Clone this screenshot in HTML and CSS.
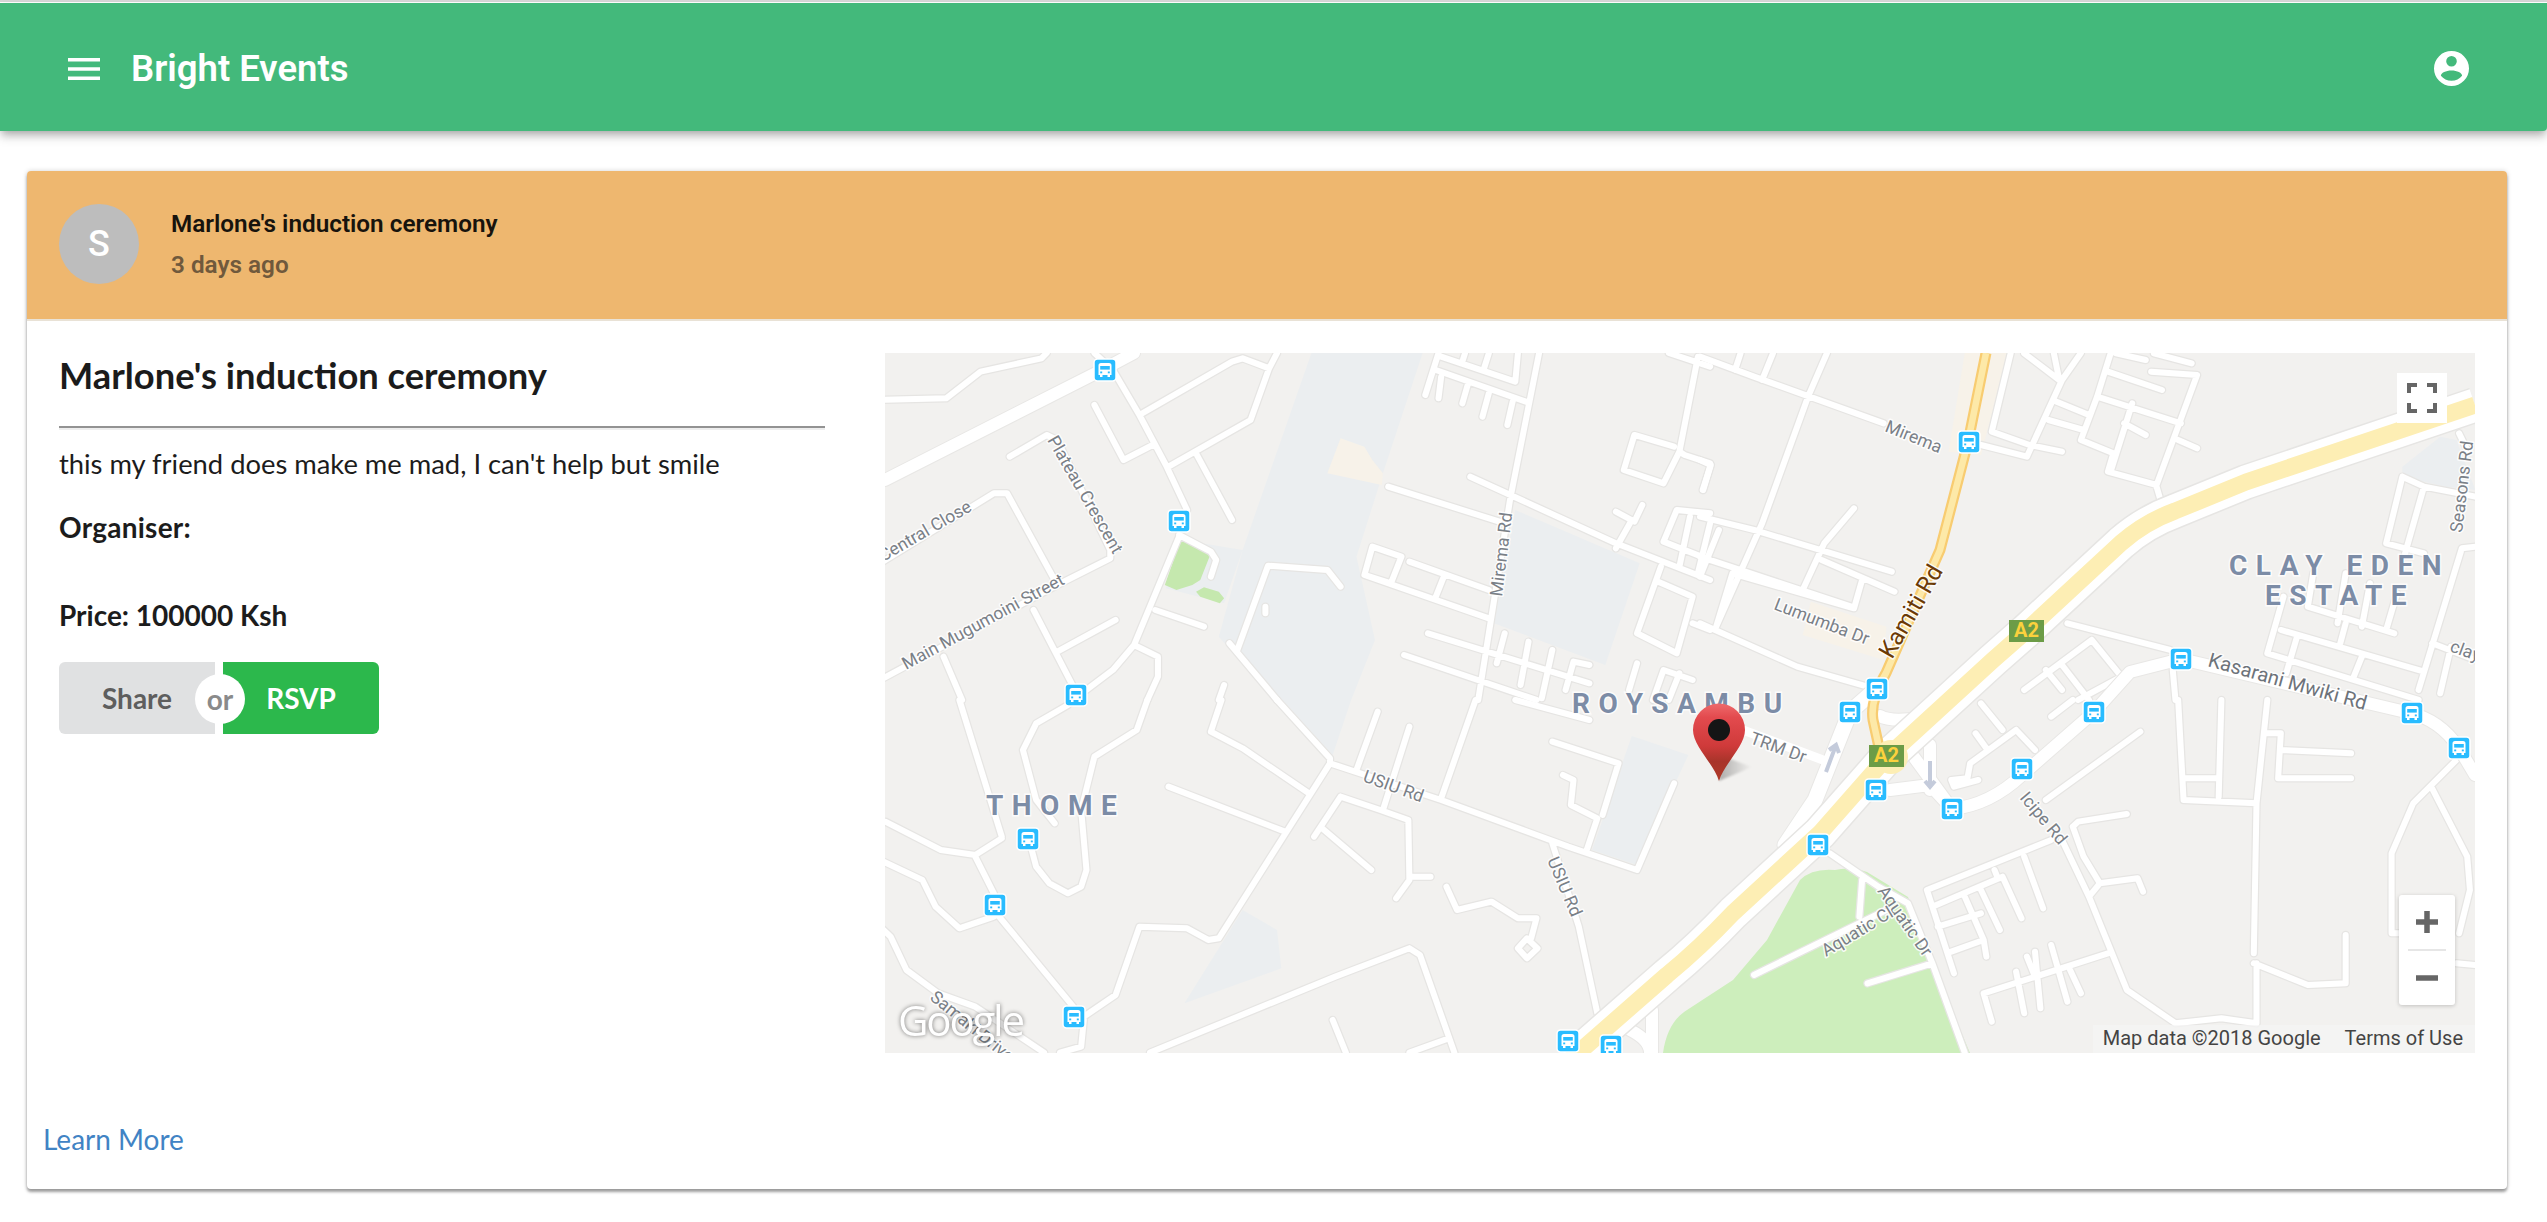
FILE: index.html
```html
<!DOCTYPE html>
<html lang="en">
<head>
<meta charset="utf-8">
<title>Bright Events</title>
<link rel="stylesheet" href="styles.css">
</head>
<body>
<div class="app">
  <header class="navbar">
    <svg class="menu-icon" viewBox="0 0 32 22" aria-hidden="true"><path d="M0 0h32v3.600H0zM0 9.200h32v3.600H0zM0 18.400h32V22H0z"/></svg>
    <h1 class="brand">Bright Events</h1>
    <svg class="account-icon" viewBox="0 0 35 35" aria-hidden="true"><path fill-rule="evenodd" d="M17.500 0a17.500 17.500 0 1 0 0 35a17.500 17.500 0 1 0 0-35zM17.500 5a5.300 5.300 0 1 1 0 10.600a5.300 5.300 0 1 1 0-10.600zM17.500 19.500c5.600 0 10.600 2.300 10.600 5.200c-2.400 3-6.300 5-10.600 5s-8.200-2-10.600-5c0-2.900 5-5.200 10.600-5.200z"/></svg>
  </header>

  <main class="card">
    <div class="card-header">
      <div class="avatar">S</div>
      <div class="header-text">
        <div class="header-title">Marlone's induction ceremony</div>
        <div class="header-sub">3 days ago</div>
      </div>
    </div>

    <div class="card-body">
      <section class="details">
        <h2 class="event-title">Marlone's induction ceremony</h2>
        <p class="line description">this my friend does make me mad, I can't help but smile</p>
        <p class="line strong organiser">Organiser:</p>
        <p class="line strong price">Price: 100000 Ksh</p>
        <div class="buttons">
          <button class="btn btn-share">Share</button>
          <button class="btn btn-rsvp">RSVP</button>
          <span class="or">or</span>
        </div>
      </section>

      <div class="map">
        <svg class="map-canvas" viewBox="885 353 1590 700" aria-label="Map of Roysambu">
          <defs>
            <g id="q1roads" transform="translate(880 340) scale(.5294 .3333)">
              <path d="M0 180L125 175L190 95L305 55L315 39M405 39L440 90L490 225L540 375L580 510M490 225L665 65L685 55L735 85L750 39M405 195L460 360L515 315M545 380L700 240L735 85M597 340L665 540M245 350L315 285L335 300L435 630L435 655L335 735L240 460L215 460L0 670M335 735L0 1020M290 810L365 1040M335 935L445 840M120 950L155 1080M565 590L480 915L440 990L390 1050M565 585L625 635L635 660L625 710M520 810L612 860M480 915L525 950L525 1010L505 1080M650 1035L640 1080M870 740L845 690L733 677L675 930M728 800L728 820M660 910L750 1080M960 440L1170 545M1115 410L1390 610L1568 720M1245 39L1190 480L1130 1080M1055 39L1030 165M1050 90L1220 185M1060 50L1200 125L1205 39M1105 40L1100 65M1150 40L1140 90M1060 110L1055 175M1110 135L1100 190M1150 160L1138 230M1195 185L1185 255M1545 50L1510 335M1490 39L1568 80M1500 320L1425 285L1405 390L1480 430L1510 335L1520 345L1568 370M1568 380L1555 450M1440 495L1425 545L1390 515M1420 540L1390 625M1568 520L1505 510L1480 605L1568 660M1530 530L1510 680M1568 550L1545 700M1475 680L1430 880L1505 940L1535 770L1470 725M1535 850L1568 870M930 620L985 650L965 730L915 705ZM915 705L1150 835M1000 665L1150 750M1065 710L1050 770M1035 880L1340 1030M990 945L1240 1080M1180 880L1165 970M1225 905L1210 1035M1270 930L1250 1075M1340 975L1310 965L1295 1050M1430 970L1415 1050M1535 1020L1480 990L1460 1080M1510 1000L1490 1080"/>
            </g>
            <g id="q2roads" transform="translate(1700 340) scale(.5403 .3333)">
              <path d="M0 50L100 110L340 250M520 315L605 350L670 120L705 39M235 39L200 170L115 550L30 860M75 40L65 90M135 40L115 120M575 40L540 275L610 315L670 335M600 40L665 120L655 40M760 40L735 170L705 300L765 340L755 395L845 435L920 105L835 95M770 40L825 60M840 40L910 70M755 95L855 150M660 185L720 225M645 240L710 270M735 170L890 250M800 190L760 395M785 250L825 285M885 300L920 325M845 440L855 495M0 360L20 375L5 450M285 505L230 610L190 750M0 530L100 570L355 695M225 660L360 755M300 720L285 805L60 700M35 570L0 710M0 650L280 800M60 700L30 860M0 850L180 980L310 1040M680 850L870 930M725 900L600 1050M725 900L780 1010L700 1080M670 975L720 1080M640 990L670 1050M875 990L880 1080M1300 410L1270 610L1340 640M1300 410L1340 440L1435 470M1340 440L1305 640M1405 280L1420 330M1435 620L1410 625L1330 1050M1355 910L1435 960M1390 920L1370 1060M1080 770L1050 940L1330 1080M1075 870L1340 995M1105 890L1085 1000M1195 850L1185 910M1225 950L1210 1010M1135 700L1125 800L1285 880M1195 700L1180 850M1240 730L1225 860M1290 760L1270 870"/>
            </g>
            <g id="q3roads" transform="translate(880 700) scale(.5294 .3333)">
              <path d="M150 0L230 410M230 415L180 465L115 450L10 365L0 365M355 15L295 70L270 150L295 300L330 370M505 0L485 90L405 170L380 330L390 510L380 560L355 580L320 550L295 500L285 440M180 470L215 580M0 480L80 540L105 620L150 685L215 650M225 650L365 920M0 680L20 710L50 810L110 880L180 920L310 1058M385 960L380 1040L340 1058M385 950L445 885L490 680L580 685L620 720L640 715L770 390L850 190M645 0L625 95L685 145L810 280M545 260L765 395M750 0L850 175L850 190L1060 300L1300 440L1430 510L1500 250M940 35L900 210M1000 80L950 330M1125 0L1060 295M870 290L945 330L998 360L1000 540L975 595M1000 530L1040 530M870 290L820 410M835 385L928 510M1070 560L1090 630L1155 605L1205 655L1240 655L1230 715M1205 745L1222 715L1242 745L1222 775ZM1270 125L1395 190L1365 345M1290 225L1310 240L1305 315L1355 355L1335 450M1270 430L1320 680L1355 940M1000 745L860 830L510 1058M1000 745L1020 765L1085 1058M855 960L880 1058M1075 1015L1000 1058M1200 0L1340 60"/>
            </g>
            <g id="q4roads" transform="translate(1700 700) scale(.5403 .3333)">
              <path d="M520 10L560 90M510 100L530 145M585 90L500 190L495 235L465 240L470 260L515 240M585 90L620 150M815 95L640 300M650 50L690 0M650 420L420 570L430 620L470 820M430 620L560 530L595 655M520 570L555 690M440 680L520 640M465 755L525 720L530 770M490 590L525 720M545 510L550 530M600 470L635 625M670 420L720 590L790 870L880 970L965 955L1030 970M690 380L710 470L740 550L810 535L820 575M740 550L720 590M690 380L700 365L790 342M755 760L525 880L540 965M585 815L600 940M620 755L630 925M650 735L680 905M685 810L705 880M605 770L620 830M885 0L895 300L1030 310L1025 760M1050 0L1030 310M965 0L960 290M895 235L960 235M1045 100L1075 100L1070 235L1205 235M1075 150L1205 160M1025 790L1125 855L1195 850L1195 705M1030 790L1030 970M1400 180L1320 310L1280 460L1280 700L1295 700M1355 265L1420 470L1425 570L1405 700M1400 790L1435 795M240 460L330 560L385 610L430 790L490 1058M300 540L295 650M430 790L310 850M345 630L100 825"/>
            </g>
            <g id="midroads">
              <path d="M885 480L1102 370L1134 353M1952 809Q1990 805 2022 775L2094 712L2130 672L2181 659L2410 713Q2440 720 2459 748L2475 775M1890 790L1930 785L1952 809M1905 745L1952 809M1880 716Q1890 722 1920 718M1930 745L1930 790M1652 1010L1652 1053M1630 1030Q1650 1040 1650 1053"/>
            </g>
            <g id="highway">
              <path d="M1570 1060L1667 975Q1700 948 1733 913L1820 833L1887 757L1993 660L2026 631L2121 543Q2145 522 2175 511L2246 482L2475 405"/>
            </g>
            <symbol id="bus" viewBox="0 0 24 24">
              <rect class="bus-box" x="1" y="1" width="22" height="22" rx="3.500"/>
              <path class="bus-body" d="M8 5h8a2.500 2.500 0 0 1 2.500 2.500V17h-1.500v2h-2.500v-2h-5v2H7v-2H5.500V7.500A2.500 2.500 0 0 1 8 5z"/>
              <rect class="bus-glass" x="7.200" y="8" width="9.600" height="3.600"/>
              <rect class="bus-glass" x="7.200" y="13.500" width="2" height="1.800"/>
              <rect class="bus-glass" x="14.800" y="13.500" width="2" height="1.800"/>
            </symbol>
            <linearGradient id="pinFill" x1="0" y1="0" x2="0" y2="1">
              <stop offset="0" stop-color="#ee6a6c"/>
              <stop offset=".18" stop-color="#e34a4e"/>
              <stop offset=".55" stop-color="#cf3a3a"/>
              <stop offset=".75" stop-color="#a8342a"/>
              <stop offset="1" stop-color="#b03a28"/>
            </linearGradient>
            <linearGradient id="pinShade" x1="0" y1="0" x2="1" y2="0">
              <stop offset="0" stop-color="#000" stop-opacity=".28"/>
              <stop offset="1" stop-color="#000" stop-opacity="0"/>
            </linearGradient>
          </defs>

          <rect class="land" x="885" y="353" width="1590" height="700"/>

          <g class="area-blue">
            <path transform="translate(880 340) scale(.5294 .3333)" d="M815 39L1025 39L950 400L900 650L935 900L890 1080L745 1080L640 890L685 630ZM570 600L685 630L650 790L540 745ZM1200 510L1435 670L1370 975L1160 850Z"/>
            <path transform="translate(880 700) scale(.5294 .3333)" d="M760 0L890 0L855 165ZM1420 108L1527 165L1430 495L1345 450ZM685 630L750 690L758 805L575 910Z"/>
            <path transform="translate(1700 340) scale(.5403 .3333)" d="M1300 380L1370 290L1400 300L1435 450L1380 440L1300 410Z"/>
          </g>
          <g class="area-cream">
            <path transform="translate(880 340) scale(.5294 .3333)" d="M870 295L915 320L930 360L950 400L948 435L845 400Z"/>
            <path transform="translate(1700 340) scale(.5403 .3333)" d="M205 785L345 860L340 960L190 885ZM490 39L570 39L520 345L460 335Z"/>
          </g>
          <g class="area-green">
            <path class="park-small" transform="translate(880 340) scale(.5294 .3333)" d="M568 600L625 640L605 720L590 735L560 750L538 735ZM612 742L640 755L650 775L642 790L605 770L597 755Z"/>
            <path d="M1663 1053C1666 1032 1674 1018 1687 1010L1733 980L1767 940L1800 880Q1812 868 1835 870Q1850 866 1867 872L1908 897L1935 970L1970 1053Z"/>
          </g>

          <use href="#q1roads" class="casing"/><use href="#q2roads" class="casing"/><use href="#q3roads" class="casing"/><use href="#q4roads" class="casing"/>
          <use href="#q1roads" class="road"/><use href="#q2roads" class="road"/><use href="#q3roads" class="road"/><use href="#q4roads" class="road"/>

          <use href="#midroads" class="mid-casing"/><use href="#midroads" class="mid"/>
          <path class="wide-link-casing" d="M1875 690L1850 712L1815 800L1785 845"/>
          <path class="wide-link" d="M1875 690L1850 712L1815 800L1785 845"/>
          <path class="trm" d="M1743 730L1823 760"/>

          <use href="#highway" class="hw-casing"/><use href="#highway" class="hw-white"/><use href="#highway" class="hw-yellow"/>

          <path class="kamiti-edge" d="M1986 353L1968 442L1940 550L1886 673Q1870 700 1873 720L1880 752"/>
          <path class="kamiti-fill" d="M1986 353L1968 442L1940 550L1886 673Q1870 700 1873 720L1880 752"/>
          <circle class="junction" cx="1891" cy="757" r="17"/>

          <path class="oneway" d="M1826 772L1836 745M1829 750L1836 745L1839 753"/>
          <path class="oneway" d="M1930 761V786M1925 781L1930 787L1935 781"/>

          <g class="road-label">
            <text transform="translate(1047 440) rotate(60)">Plateau Crescent</text>
            <text transform="translate(883 562) rotate(-30)">Central Close</text>
            <text transform="translate(906 670) rotate(-28.500)">Main Mugumoini Street</text>
            <text transform="translate(1502 597) rotate(-83)">Mirema Rd</text>
            <text transform="translate(1884 431) rotate(22)">Mirema</text>
            <text transform="translate(1773 609) rotate(21)">Lumumba Dr</text>
            <text class="label-large" transform="translate(2207 666) rotate(15.600)">Kasarani Mwiki Rd</text>
            <text transform="translate(2462 533) rotate(-83)">Seasons Rd</text>
            <text transform="translate(2449 651) rotate(20)">clay</text>
            <text transform="translate(1749 743) rotate(20)">TRM Dr</text>
            <text transform="translate(2019 798) rotate(50)">Icipe Rd</text>
            <text transform="translate(1877 891) rotate(55)">Aquatic Dr</text>
            <text transform="translate(1826 957) rotate(-31)">Aquatic Cl</text>
            <text transform="translate(1362 781) rotate(20)">USIU Rd</text>
            <text transform="translate(1547 860) rotate(67)">USIU Rd</text>
            <text transform="translate(929 999) rotate(39)">Samaki Drive</text>
          </g>
          <text class="label-kamiti" transform="translate(1892 660) rotate(-60)">Kamiti Rd</text>

          <g class="place-label">
            <text x="1572" y="713">ROYSAMBU</text>
            <text x="986" y="815">THOME</text>
            <text x="2229" y="575">CLAY EDEN</text>
            <text x="2265" y="605">ESTATE</text>
          </g>

          <g class="shield">
            <rect x="2009" y="620" width="35" height="22"/><text x="2026.500" y="637">A2</text>
            <rect x="1869" y="745" width="35" height="22"/><text x="1886.500" y="762">A2</text>
          </g>

          <use href="#bus" x="1093" y="358" width="24" height="24"/>
          <use href="#bus" x="1167" y="509" width="24" height="24"/>
          <use href="#bus" x="1064" y="683" width="24" height="24"/>
          <use href="#bus" x="1016" y="827" width="24" height="24"/>
          <use href="#bus" x="983" y="893" width="24" height="24"/>
          <use href="#bus" x="1062" y="1005" width="24" height="24"/>
          <use href="#bus" x="1556" y="1029" width="24" height="24"/>
          <use href="#bus" x="1599" y="1034" width="24" height="24"/>
          <use href="#bus" x="1957" y="430" width="24" height="24"/>
          <use href="#bus" x="1865" y="677" width="24" height="24"/>
          <use href="#bus" x="2169" y="647" width="24" height="24"/>
          <use href="#bus" x="1838" y="700" width="24" height="24"/>
          <use href="#bus" x="2082" y="700" width="24" height="24"/>
          <use href="#bus" x="2400" y="701" width="24" height="24"/>
          <use href="#bus" x="2447" y="736" width="24" height="24"/>
          <use href="#bus" x="2010" y="757" width="24" height="24"/>
          <use href="#bus" x="1864" y="778" width="24" height="24"/>
          <use href="#bus" x="1940" y="797" width="24" height="24"/>
          <use href="#bus" x="1806" y="833" width="24" height="24"/>

          <path class="pin-shadow" d="M1719 781L1722 756L1752 767Z"/>
          <path class="pin" d="M1719 781C1714 764 1693 746 1693 730A25.500 26 0 0 1 1745 730C1745 746 1724 764 1719 781Z"/>
          <circle class="pin-dot" cx="1719" cy="730" r="11"/>

          <text class="google-logo" x="898" y="1036">Google</text>
        </svg>

        <button class="fullscreen" aria-label="Toggle fullscreen">
          <svg viewBox="0 0 30 30" aria-hidden="true"><path d="M0 0h10v4H4v6H0zM20 0h10v10h-4V4h-6zM0 20h4v6h6v4H0zM26 20h4v10H20v-4h6z"/></svg>
        </button>
        <div class="zoom-control">
          <button class="zoom-btn" aria-label="Zoom in"><svg viewBox="0 0 20 20" aria-hidden="true"><path d="M7.500 0h5v7.500H20v5h-7.500V20h-5v-7.500H0v-5h7.500z"/></svg></button>
          <span class="zoom-sep"></span>
          <button class="zoom-btn" aria-label="Zoom out"><svg viewBox="0 0 20 20" aria-hidden="true"><path d="M0 7.500h20v5H0z"/></svg></button>
        </div>
        <div class="attribution">
          <span>Map data ©2018 Google</span>
          <span class="terms">Terms of Use</span>
        </div>
      </div>
    </div>

    <a class="learn-more" href="#">Learn More</a>
  </main>
</div>
</body>
</html>
```

FILE: styles.css
```css
* { box-sizing: border-box; }

html, body {
  margin: 0;
  padding: 0;
  background: #fff;
}

body {
  height: 1222px;
  overflow: hidden;
  font-family: "Lato", "Liberation Sans", sans-serif;
  color: #1c1c1c;
}

.app {
  border-top: 2px solid #d6d6d6;
  padding-top: 1px;
  height: 100%;
}

/* Top bar */
.navbar {
  display: flex;
  align-items: center;
  height: 128px;
  padding: 3px 78px 0 68px;
  background: #43b97b;
  color: #fff;
  border-radius: 0 0 4px 0;
  box-shadow: 0 4px 8px -2px rgba(0, 0, 0, .3), 0 8px 10px rgba(0, 0, 0, .1);
}

.menu-icon {
  width: 32px;
  height: 22px;
  fill: #fff;
  margin-right: 31px;
}

.brand {
  margin: 0;
  flex: 1;
  font: 600 36.500px/1.2 "Roboto", sans-serif;
}

.account-icon {
  width: 35px;
  height: 35px;
  fill: #fff;
}

/* Card */
.card {
  margin: 40px 40px 0 27px;
  height: 1018px;
  border-radius: 4px;
  background: #fff;
  box-shadow: 0 3px 3px rgba(0, 0, 0, .35), 0 0 5px rgba(0, 0, 0, .18);
  overflow: visible;
}

.card-header {
  display: flex;
  align-items: center;
  gap: 32px;
  height: 150px;
  padding: 0 32px 2px;
  background: #eeb76f;
  border-bottom: 2px solid #e9e2d6;
  border-radius: 4px 4px 0 0;
}

.avatar {
  display: flex;
  align-items: center;
  justify-content: center;
  width: 80px;
  height: 80px;
  border-radius: 50%;
  background: #bdbdbd;
  color: #fff;
  font: 500 36px "Roboto", sans-serif;
}

.header-text {
  font: 600 24.300px/41px "Roboto", sans-serif;
}

.header-title { color: #17130d; }
.header-sub { color: #70593c; }

.card-body {
  display: grid;
  grid-template-columns: 766px 1590px;
  justify-content: space-between;
  padding: 32px 32px 0;
}

/* Left column */
.event-title {
  margin: 0;
  padding-bottom: 28px;
  border-bottom: 2px solid #939393;
  font: 700 36.300px/44px "Lato", sans-serif;
  color: #1b1b1b;
  box-shadow: 0 2px 0 #eee;
}

.event-title { height: 75px; }

.line {
  margin: 0;
  font-size: 28px;
  line-height: 40px;
}

.description {
  margin-top: 16px;
  font-size: 27.350px;
}

.strong { font-weight: 700; }
.organiser { margin-top: 23px; letter-spacing: .25px; }
.price { margin-top: 48px; }

.buttons {
  position: relative;
  display: flex;
  gap: 8px;
  width: 320px;
  margin-top: 27px;
}

.btn {
  flex: 1;
  height: 72px;
  border: 0;
  padding: 0;
  font: 700 28px "Lato", sans-serif;
}

.btn-share {
  background: #e0e1e2;
  color: #5e5e5e;
  border-radius: 6px 0 0 6px;
}

.btn-rsvp {
  background: #2cb84c;
  color: #fff;
  border-radius: 0 6px 6px 0;
}

.or {
  position: absolute;
  left: 136px;
  top: 12px;
  width: 50px;
  height: 50px;
  border-radius: 50%;
  background: #fff;
  color: #8a8a8a;
  font-size: 28px;
  font-weight: 700;
  line-height: 50px;
  text-align: center;
}

/* Map */
.map {
  position: relative;
  height: 700px;
  overflow: hidden;
}

.map-canvas {
  display: block;
  width: 1590px;
  height: 700px;
}

.land { fill: #f2f1ef; }
.area-blue { fill: #ebeef0; }
.area-cream { fill: #f7f2e9; }
.area-green { fill: #cdeebc; }
.area-green .park-small { fill: #c5e8ae; }

#q1roads path, #q2roads path, #q3roads path, #q4roads path {
  vector-effect: non-scaling-stroke;
}

.casing, .road, .mid-casing, .mid, .hw-casing, .hw-white, .hw-yellow {
  fill: none;
  stroke-linecap: round;
  stroke-linejoin: round;
}

.casing { stroke: #e6e5e3; stroke-width: 8.500px; }
.road { stroke: #fff; stroke-width: 6px; }
.mid-casing { stroke: #e8e7e5; stroke-width: 14px; }
.mid { stroke: #fff; stroke-width: 12px; }

.wide-link-casing, .wide-link, .trm {
  fill: none;
  stroke-linecap: round;
  stroke-linejoin: round;
}
.wide-link-casing { stroke: #e8e7e5; stroke-width: 17px; }
.wide-link { stroke: #fff; stroke-width: 15px; }
.trm { stroke: #fff; stroke-width: 9px; }

.hw-casing { stroke: #e6e5e3; stroke-width: 36px; stroke-linecap: butt; }
.hw-white { stroke: #fff; stroke-width: 33px; stroke-linecap: butt; }
.hw-yellow { stroke: #fdeeb4; stroke-width: 17px; stroke-linecap: butt; }

.kamiti-edge, .kamiti-fill { fill: none; }
.kamiti-edge { stroke: #f8cc71; stroke-width: 11px; }
.kamiti-fill { stroke: #fde9a8; stroke-width: 6.500px; }
.junction { fill: #fdeeb4; }

.oneway { fill: none; stroke: #c4cbdb; stroke-width: 4px; }

.road-label text, .label-kamiti {
  font-family: "Roboto", sans-serif;
  paint-order: stroke;
  stroke: rgba(255, 255, 255, .85);
  stroke-width: 3px;
  stroke-linejoin: round;
}

.road-label text {
  font-size: 17.500px;
  fill: #7a8087;
}

.road-label .label-large { font-size: 20px; fill: #6d737a; }

.label-kamiti {
  font-size: 24px;
  fill: #6b3a06;
}

.place-label text {
  font: 700 28px "Roboto", sans-serif;
  letter-spacing: 8.500px;
  fill: #7c8ca6;
  paint-order: stroke;
  stroke: rgba(255, 255, 255, .8);
  stroke-width: 3px;
}

.shield rect { fill: #6c9c47; }
.shield text {
  font: 700 20px "Roboto", sans-serif;
  fill: #fbd13d;
  text-anchor: middle;
}

.bus-box { fill: #29bcff; stroke: #fff; stroke-width: 1.500; }
.bus-body { fill: #fff; }
.bus-glass { fill: #29bcff; }

.pin { fill: url(#pinFill); }
.pin-dot { fill: #151515; }
.pin-shadow { fill: url(#pinShade); filter: blur(1px); }

.google-logo {
  font: 500 42px "Open Sans", sans-serif;
  letter-spacing: -2.200px;
  fill: #fff;
  filter: drop-shadow(0 0 2px rgba(0, 0, 0, .5));
}

.fullscreen {
  position: absolute;
  top: 20px;
  left: 1512px;
  width: 50px;
  height: 50px;
  padding: 10px;
  border: 0;
  background: #fff;
}

.fullscreen svg, .zoom-btn svg {
  display: block;
  fill: #666;
}

.zoom-control {
  position: absolute;
  top: 542px;
  left: 1514px;
  display: flex;
  flex-direction: column;
  align-items: center;
  width: 56px;
  height: 110px;
  background: #fff;
  border-radius: 3px;
  box-shadow: 0 1px 4px rgba(0, 0, 0, .2);
}

.zoom-btn {
  display: flex;
  align-items: center;
  justify-content: center;
  width: 56px;
  height: 54px;
  padding: 0;
  border: 0;
  background: none;
}

.zoom-btn svg {
  width: 22px;
  height: 22px;
}

.zoom-sep {
  display: block;
  width: 38px;
  height: 2px;
  background: #e6e6e6;
}

.attribution {
  position: absolute;
  right: 0;
  bottom: 0;
  display: flex;
  gap: 24px;
  height: 28px;
  padding: 0 12px 0 10px;
  background: rgba(245, 245, 245, .7);
  font: 400 20px/26px "Roboto", sans-serif;
  color: #444;
}

/* Footer link */
.learn-more {
  display: block;
  padding: 66px 16px 0;
  font-size: 28px;
  line-height: 40px;
  color: #4183c4;
  text-decoration: none;
}
```
